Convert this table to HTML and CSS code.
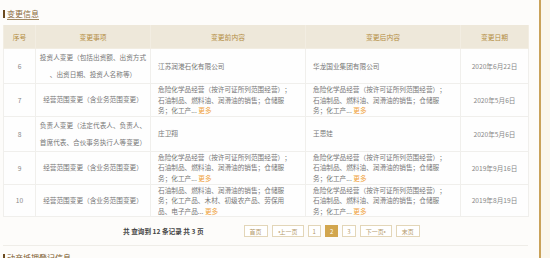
FILE: index.html
```html
<!DOCTYPE html>
<html lang="zh">
<head>
<meta charset="utf-8">
<link rel="stylesheet" href="styles.css">
</head>
<body>
<div class="page">
  <div class="main">
    <div class="sec-title"><span class="bar"></span><span class="title-text">变更信息</span></div>
    <table class="tbl">
      <colgroup>
        <col class="c1"><col class="c2"><col class="c3"><col class="c4"><col class="c5">
      </colgroup>
      <thead>
        <tr><th>序号</th><th>变更事项</th><th>变更前内容</th><th>变更后内容</th><th>变更日期</th></tr>
      </thead>
      <tbody>
        <tr class="r-tall">
          <td class="num">6</td>
          <td class="item">投资人变更（包括出资额、出资方式<br>、出资日期、投资人名称等）</td>
          <td class="content">江苏润港石化有限公司</td>
          <td class="content">华龙国业集团有限公司</td>
          <td class="date">2020年6月22日</td>
        </tr>
        <tr>
          <td class="num">7</td>
          <td class="item">经营范围变更（含业务范围变更）</td>
          <td class="content">危险化学品经营（按许可证所列范围经营）；石油制品、燃料油、润滑油的销售；仓储服务；化工产... <span class="more">更多</span></td>
          <td class="content">危险化学品经营（按许可证所列范围经营）；石油制品、燃料油、润滑油的销售；仓储服务；化工产... <span class="more">更多</span></td>
          <td class="date">2020年5月6日</td>
        </tr>
        <tr class="r-tall">
          <td class="num">8</td>
          <td class="item">负责人变更（法定代表人、负责人、首席代表、合伙事务执行人等变更）</td>
          <td class="content">庄卫翔</td>
          <td class="content">王思娃</td>
          <td class="date">2020年5月6日</td>
        </tr>
        <tr>
          <td class="num">9</td>
          <td class="item">经营范围变更（含业务范围变更）</td>
          <td class="content">危险化学品经营（按许可证所列范围经营）；石油制品、燃料油、润滑油的销售；仓储服务；化工产... <span class="more">更多</span></td>
          <td class="content">危险化学品经营（按许可证所列范围经营）；石油制品、燃料油、润滑油的销售；仓储服务；化工产... <span class="more">更多</span></td>
          <td class="date">2019年9月16日</td>
        </tr>
        <tr>
          <td class="num">10</td>
          <td class="item">经营范围变更（含业务范围变更）</td>
          <td class="content">石油制品、燃料油、润滑油的销售；仓储服务；化工产品、木材、初级农产品、劳保用品、电子产品... <span class="more">更多</span></td>
          <td class="content">危险化学品经营（按许可证所列范围经营）；石油制品、燃料油、润滑油的销售；仓储服务；化工产... <span class="more">更多</span></td>
          <td class="date">2019年8月19日</td>
        </tr>
      </tbody>
    </table>
    <div class="pager">
      <span class="info">共 查询到 12 条记录 共 3 页</span>
      <div class="btns">
        <span class="btn">首页</span>
        <span class="btn"><span class="arr">◂</span> 上一页</span>
        <span class="btn num-btn">1</span>
        <span class="btn num-btn active">2</span>
        <span class="btn num-btn">3</span>
        <span class="btn">下一页 <span class="arr">▸</span></span>
        <span class="btn">末页</span>
      </div>
    </div>
    <div class="sec-title next"><span class="bar"></span><span class="title-text plain">动产抵押登记信息</span></div>
  </div>
  <div class="side"></div>
</div>
</body>
</html>
```

FILE: styles.css
```css
html, body {
  margin: 0;
  padding: 0;
}
body {
  font-family: "Noto Sans CJK SC", "Noto Sans", sans-serif;
  background: #faf6ec;
  width: 550px;
  height: 258px;
  overflow: hidden;
  text-spacing-trim: space-all;
}
.page {
  display: flex;
  height: 258px;
}
.main {
  width: 525px;
  padding: 0 11px 0 3px;
  background: #fdfcfa;
  border-right: 2px solid #c9a25a;
  box-shadow: 1px 0 0 #e9d7ae;
}
.side {
  flex: 1;
  background: #faf6ec;
}
.sec-title {
  display: flex;
  align-items: center;
  height: 16px;
  padding-top: 6px;
  padding-bottom: 3px;
}
.sec-title .bar {
  width: 2px;
  height: 8px;
  background: #6b4a1f;
  margin-right: 2px;
}
.title-text {
  font-size: 8px;
  line-height: 10px;
  color: #8a6a3a;
  border-bottom: 1px solid #a08860;
}
.title-text.plain {
  border-bottom: none;
  color: #7a5a2a;
}
.sec-title.next {
  padding-top: 4px;
}
.tbl {
  width: 525px;
  border-collapse: collapse;
  table-layout: fixed;
  font-size: 6.65px;
  color: #777;
  background: #fefefe;
}
.c1 { width: 32px; }
.c2 { width: 115px; }
.c3 { width: 155px; }
.c4 { width: 155px; }
.c5 { width: 68px; }
.tbl th {
  height: 23px;
  padding: 0;
  background: #eee8da;
  color: #b48d42;
  font-weight: normal;
  font-size: 6.8px;
  border: 1px solid #f2ede2;
  border-top: none;
}
.tbl td {
  border: 1px solid #f0efec;
  padding: 0;
  height: 31px;
  vertical-align: middle;
}
.tbl tr.r-tall td {
  height: 33px;
}
.tbl td.num, .tbl td.date {
  text-align: center;
  color: #888;
}
.tbl td.item {
  text-align: center;
  line-height: 17px;
  padding: 0 3px;
}
.tbl td.content {
  line-height: 10.6px;
  padding: 0 10px 0 7px;
}
.more {
  color: #f0a23c;
}
.pager {
  display: flex;
  align-items: center;
  height: 28px;
  padding-left: 120px;
  border-bottom: 1px solid #efede8;
}
.info {
  font-size: 6.65px;
  color: #444;
  font-weight: bold;
  margin-right: 40px;
}
.btns {
  display: flex;
  gap: 4px;
}
.btn {
  display: flex;
  align-items: center;
  justify-content: center;
  height: 10px;
  padding: 0 5px;
  border: 1px solid #e3d6b8;
  background: #fff;
  color: #b49a6a;
  font-size: 6px;
}
.btn .arr {
  font-size: 4px;
}
.btn.num-btn {
  padding: 0 4px;
}
.btn.active {
  background: #d2a64e;
  border-color: #d2a64e;
  color: #fff;
}
```
